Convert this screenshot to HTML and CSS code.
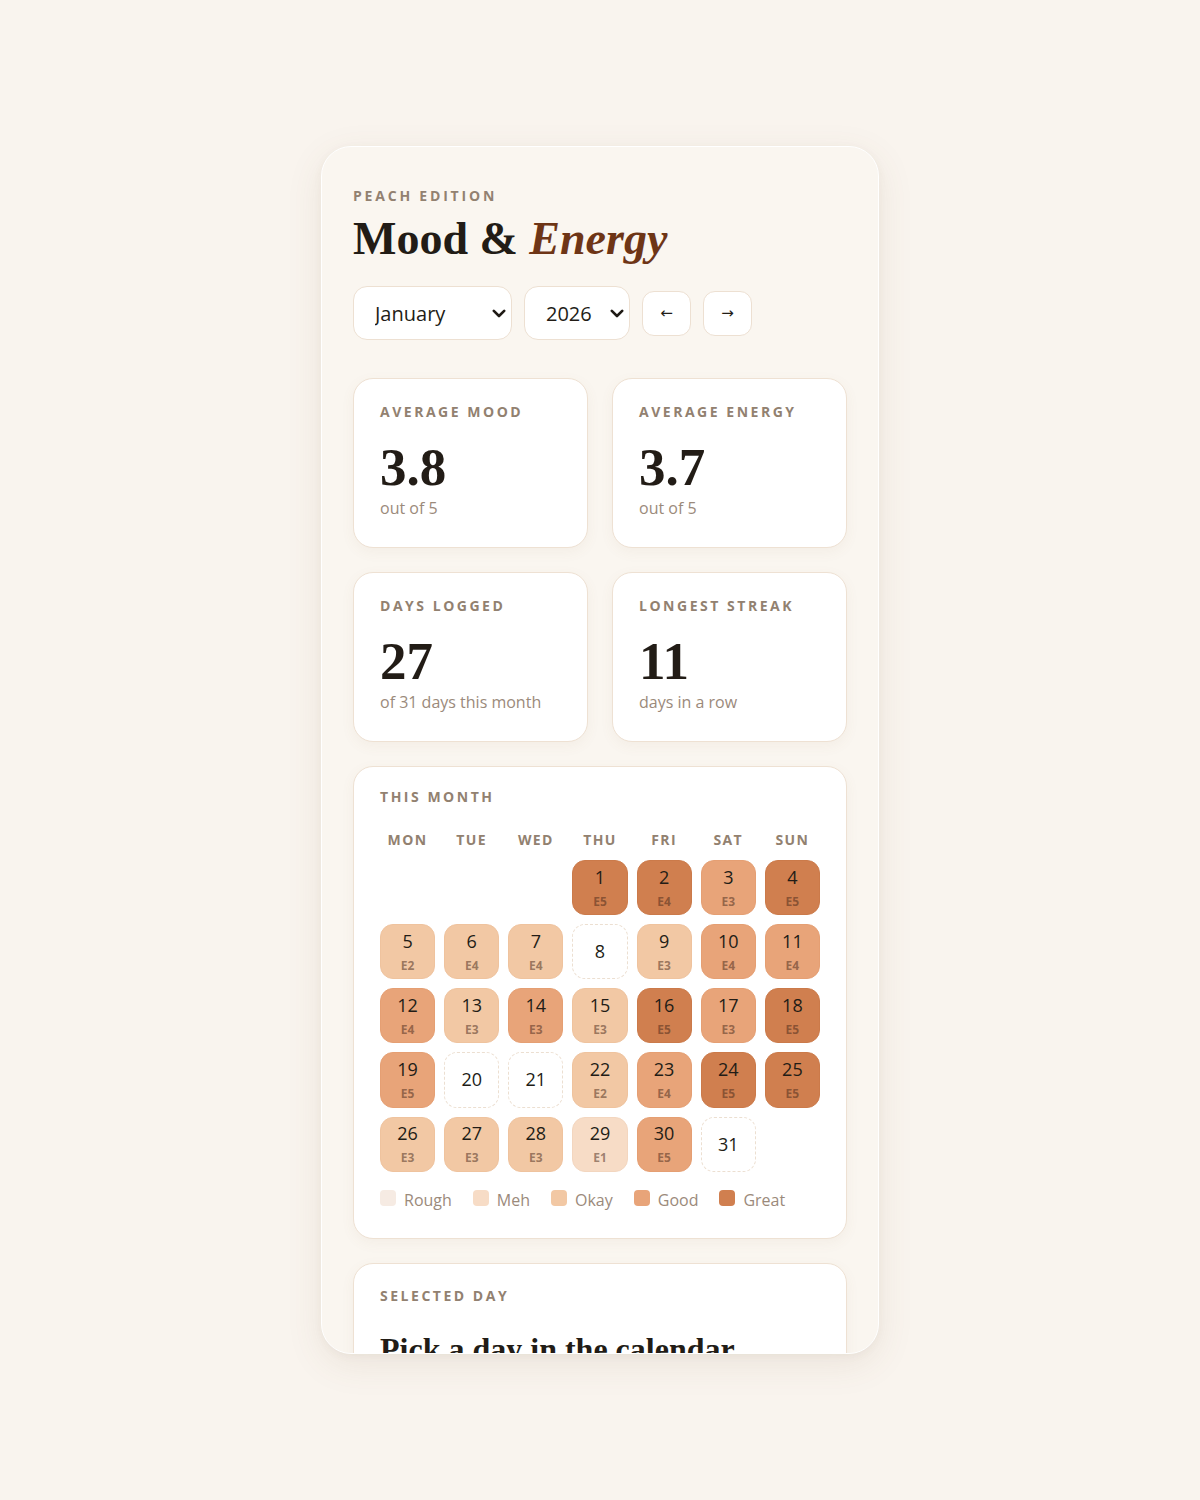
FILE: index.html
```html
<!DOCTYPE html>
<html lang="en">
<head>
<meta charset="utf-8">
<title>Mood &amp; Energy</title>
<link rel="stylesheet" href="styles.css">
</head>
<body>
<main class="app">
  <header class="head">
    <p class="eyebrow">Peach Edition</p>
    <h1 class="title">Mood &amp; <em>Energy</em></h1>
  </header>

  <div class="controls">
    <div class="select-wrap select-month">
      <select class="select">
        <option selected>January</option>
        <option>February</option>
        <option>March</option>
        <option>April</option>
        <option>May</option>
        <option>June</option>
        <option>July</option>
        <option>August</option>
        <option>September</option>
        <option>October</option>
        <option>November</option>
        <option>December</option>
      </select>
      <svg class="chev" viewBox="0 0 14 9" aria-hidden="true"><path d="M1.8 1.8 L7 7 L12.2 1.8"/></svg>
    </div>
    <div class="select-wrap select-year">
      <select class="select">
        <option>2025</option>
        <option selected>2026</option>
        <option>2027</option>
      </select>
      <svg class="chev" viewBox="0 0 14 9" aria-hidden="true"><path d="M1.8 1.8 L7 7 L12.2 1.8"/></svg>
    </div>
    <button class="nav-btn" type="button">←</button>
    <button class="nav-btn" type="button">→</button>
  </div>

  <section class="stats">
    <div class="card stat">
      <p class="label">Average Mood</p>
      <p class="big">3.8</p>
      <p class="sub">out of 5</p>
    </div>
    <div class="card stat">
      <p class="label">Average Energy</p>
      <p class="big">3.7</p>
      <p class="sub">out of 5</p>
    </div>
    <div class="card stat">
      <p class="label">Days Logged</p>
      <p class="big">27</p>
      <p class="sub">of 31 days this month</p>
    </div>
    <div class="card stat">
      <p class="label">Longest Streak</p>
      <p class="big">11</p>
      <p class="sub">days in a row</p>
    </div>
  </section>

  <section class="card month">
    <p class="label">This Month</p>
    <div class="weekdays">
      <span>Mon</span><span>Tue</span><span>Wed</span><span>Thu</span><span>Fri</span><span>Sat</span><span>Sun</span>
    </div>
    <div class="grid">
      <span class="blank"></span><span class="blank"></span><span class="blank"></span>
      <button class="day m5"><b>1</b><i>E5</i></button>
      <button class="day m5"><b>2</b><i>E4</i></button>
      <button class="day m4"><b>3</b><i>E3</i></button>
      <button class="day m5"><b>4</b><i>E5</i></button>

      <button class="day m3"><b>5</b><i>E2</i></button>
      <button class="day m3"><b>6</b><i>E4</i></button>
      <button class="day m3"><b>7</b><i>E4</i></button>
      <button class="day empty"><b>8</b></button>
      <button class="day m3"><b>9</b><i>E3</i></button>
      <button class="day m4"><b>10</b><i>E4</i></button>
      <button class="day m4"><b>11</b><i>E4</i></button>

      <button class="day m4"><b>12</b><i>E4</i></button>
      <button class="day m3"><b>13</b><i>E3</i></button>
      <button class="day m4"><b>14</b><i>E3</i></button>
      <button class="day m3"><b>15</b><i>E3</i></button>
      <button class="day m5"><b>16</b><i>E5</i></button>
      <button class="day m4"><b>17</b><i>E3</i></button>
      <button class="day m5"><b>18</b><i>E5</i></button>

      <button class="day m4"><b>19</b><i>E5</i></button>
      <button class="day empty"><b>20</b></button>
      <button class="day empty"><b>21</b></button>
      <button class="day m3"><b>22</b><i>E2</i></button>
      <button class="day m4"><b>23</b><i>E4</i></button>
      <button class="day m5"><b>24</b><i>E5</i></button>
      <button class="day m5"><b>25</b><i>E5</i></button>

      <button class="day m3"><b>26</b><i>E3</i></button>
      <button class="day m3"><b>27</b><i>E3</i></button>
      <button class="day m3"><b>28</b><i>E3</i></button>
      <button class="day m2"><b>29</b><i>E1</i></button>
      <button class="day m4"><b>30</b><i>E5</i></button>
      <button class="day empty"><b>31</b></button>
    </div>
    <ul class="legend">
      <li><span class="sw m1"></span>Rough</li>
      <li><span class="sw m2"></span>Meh</li>
      <li><span class="sw m3"></span>Okay</li>
      <li><span class="sw m4"></span>Good</li>
      <li><span class="sw m5"></span>Great</li>
    </ul>
  </section>

  <section class="card selected">
    <p class="label">Selected Day</p>
    <h2 class="pick">Pick a day in the calendar</h2>
  </section>
</main>
</body>
</html>
```

FILE: styles.css
```css
* { box-sizing: border-box; }

html, body { margin: 0; padding: 0; }

body {
  background: #f9f4ee;
  font-family: "Open Sans", "Noto Sans", sans-serif;
  color: #221c16;
  min-height: 100vh;
  display: flex;
  align-items: center;
  justify-content: center;
}

p, h1, h2, ul { margin: 0; padding: 0; }

.app {
  width: 558px;
  height: 1208px;
  overflow: hidden;
  background: #faf6f0;
  border: 1px solid #ffffff;
  border-radius: 30px;
  box-shadow: 0 10px 36px rgba(120, 90, 60, 0.10), 0 2px 8px rgba(120, 90, 60, 0.05);
  padding: 39px 31px 0;
}

.eyebrow {
  font-size: 14px;
  line-height: 19px;
  font-weight: 700;
  letter-spacing: 0.2em;
  text-transform: uppercase;
  color: #928170;
}

.title {
  margin-top: 9px;
  font-family: "Liberation Serif", "Times New Roman", serif;
  font-size: 46px;
  line-height: 50px;
  font-weight: 700;
  color: #221c16;
}

.title em {
  font-style: italic;
  color: #6e3516;
}

.controls {
  margin-top: 22px;
  display: flex;
  align-items: center;
  gap: 12px;
}

.select-wrap {
  position: relative;
  height: 54px;
}

.select-month { width: 159px; }
.select-year { width: 106px; }

.select {
  appearance: none;
  -webkit-appearance: none;
  width: 100%;
  height: 54px;
  padding: 0 28px 0 21px;
  font-family: "Open Sans", "Noto Sans", sans-serif;
  font-size: 20px;
  color: #221c16;
  background: #ffffff;
  border: 1.5px solid #ede0d2;
  border-radius: 14px;
}

.chev {
  position: absolute;
  right: 6px;
  top: 23px;
  width: 14px;
  height: 9px;
  pointer-events: none;
}

.chev path {
  fill: none;
  stroke: #1f1a15;
  stroke-width: 2.6;
  stroke-linecap: round;
  stroke-linejoin: round;
}

.nav-btn {
  width: 49px;
  height: 45px;
  padding: 0;
  font-family: "DejaVu Sans", sans-serif;
  font-size: 15px;
  color: #221c16;
  background: #ffffff;
  border: 1.5px solid #ede0d2;
  border-radius: 12px;
}

.stats {
  margin-top: 38px;
  display: grid;
  grid-template-columns: 1fr 1fr;
  gap: 24px 24px;
}

.card {
  background: #ffffff;
  border: 1.5px solid #eee1d3;
  border-radius: 20px;
  box-shadow: 0 4px 14px rgba(140, 100, 60, 0.06);
}

.label {
  font-size: 14px;
  line-height: 19px;
  font-weight: 700;
  letter-spacing: 0.18em;
  text-transform: uppercase;
  color: #928170;
}

.stat {
  padding: 23px 26px 28px;
}

.big {
  margin-top: 20px;
  font-family: "Liberation Serif", "Times New Roman", serif;
  font-size: 53px;
  line-height: 52px;
  font-weight: 700;
  color: #221c16;
}

.sub {
  margin-top: 4px;
  font-size: 16px;
  line-height: 22px;
  color: #9b8a7b;
}

.month {
  margin-top: 24px;
  padding: 20px 26px 27px;
}

.weekdays {
  margin-top: 24px;
  display: grid;
  grid-template-columns: repeat(7, 1fr);
  gap: 9px;
  text-align: center;
  font-size: 14px;
  line-height: 19px;
  font-weight: 700;
  letter-spacing: 0.1em;
  text-transform: uppercase;
  color: #928170;
}

.grid {
  margin-top: 11px;
  display: grid;
  grid-template-columns: repeat(7, 1fr);
  gap: 9px;
}

.day {
  aspect-ratio: 1 / 1;
  padding: 0;
  border: 1px solid transparent;
  border-radius: 13px;
  display: flex;
  flex-direction: column;
  align-items: center;
  justify-content: center;
  gap: 6px;
  font-family: "Open Sans", "Noto Sans", sans-serif;
  color: #221c16;
}

.day b {
  font-weight: 400;
  font-size: 18px;
  line-height: 21px;
}

.day i {
  font-style: normal;
  font-weight: 700;
  font-size: 12px;
  line-height: 15px;
  color: rgba(70, 40, 25, 0.52);
}

.day.empty {
  background: #ffffff;
  border: 1.5px dashed #ecdfd1;
}

.m1 { background: #f6ebe3; }
.m2 { background: #f7dcc6; border-color: #f3d6bf; }
.m3 { background: #f2c8a4; border-color: #efc39e; }
.m4 { background: #e8a479; border-color: #e59f73; }
.m5 { background: #d07f4f; border-color: #cb7a4a; }

.legend {
  list-style: none;
  margin-top: 17px;
  display: flex;
  gap: 21px;
  font-size: 16px;
  line-height: 22px;
  color: #9b8a7b;
}

.legend li {
  display: flex;
  align-items: center;
  gap: 8px;
}

.sw {
  width: 16px;
  height: 16px;
  border-radius: 4px;
  margin-top: -4px;
}

.selected {
  margin-top: 24px;
  padding: 22px 26px 26px;
}

.pick {
  margin-top: 25px;
  font-family: "Liberation Serif", "Times New Roman", serif;
  font-size: 32px;
  line-height: 38px;
  font-weight: 700;
  color: #221c16;
}
```
